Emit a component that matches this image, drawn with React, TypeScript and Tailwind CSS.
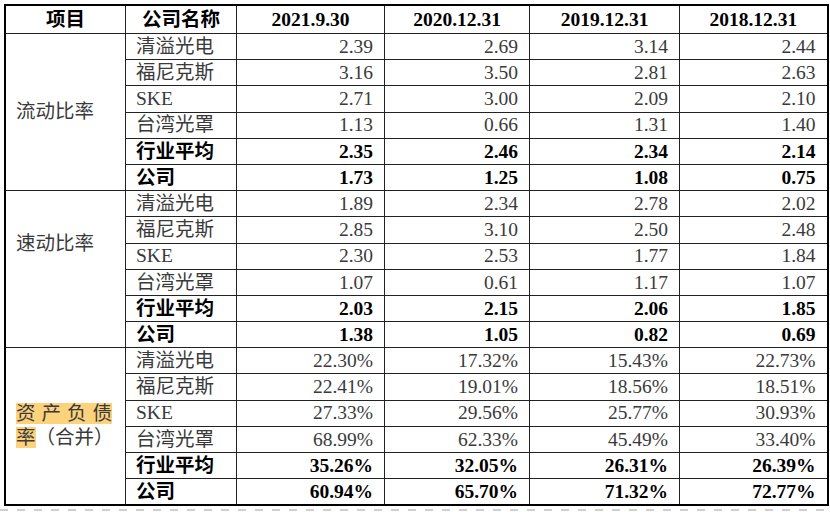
const FONT = "font-['Liberation_Serif','Noto_Sans_CJK_SC',serif]"

const YEARS = ['2021.9.30', '2020.12.31', '2019.12.31', '2018.12.31']

type Row = { name: string; values: string[]; bold?: boolean }

const GROUPS: { key: string; rows: Row[] }[] = [
  {
    key: 'current',
    rows: [
      { name: '清溢光电', values: ['2.39', '2.69', '3.14', '2.44'] },
      { name: '福尼克斯', values: ['3.16', '3.50', '2.81', '2.63'] },
      { name: 'SKE', values: ['2.71', '3.00', '2.09', '2.10'] },
      { name: '台湾光罩', values: ['1.13', '0.66', '1.31', '1.40'] },
      { name: '行业平均', values: ['2.35', '2.46', '2.34', '2.14'], bold: true },
      { name: '公司', values: ['1.73', '1.25', '1.08', '0.75'], bold: true },
    ],
  },
  {
    key: 'quick',
    rows: [
      { name: '清溢光电', values: ['1.89', '2.34', '2.78', '2.02'] },
      { name: '福尼克斯', values: ['2.85', '3.10', '2.50', '2.48'] },
      { name: 'SKE', values: ['2.30', '2.53', '1.77', '1.84'] },
      { name: '台湾光罩', values: ['1.07', '0.61', '1.17', '1.07'] },
      { name: '行业平均', values: ['2.03', '2.15', '2.06', '1.85'], bold: true },
      { name: '公司', values: ['1.38', '1.05', '0.82', '0.69'], bold: true },
    ],
  },
  {
    key: 'debt',
    rows: [
      { name: '清溢光电', values: ['22.30%', '17.32%', '15.43%', '22.73%'] },
      { name: '福尼克斯', values: ['22.41%', '19.01%', '18.56%', '18.51%'] },
      { name: 'SKE', values: ['27.33%', '29.56%', '25.77%', '30.93%'] },
      { name: '台湾光罩', values: ['68.99%', '62.33%', '45.49%', '33.40%'] },
      { name: '行业平均', values: ['35.26%', '32.05%', '26.31%', '26.39%'], bold: true },
      { name: '公司', values: ['60.94%', '65.70%', '71.32%', '72.77%'], bold: true },
    ],
  },
]

function GroupLabel({ k }: { k: string }) {
  if (k === 'current') return <span>流动比率</span>
  if (k === 'quick') return <span>速动比率</span>
  // highlighted two-line label
  return (
    <div className="flex flex-col gap-[4px] leading-[20px]">
      <div>
        <span className="bg-[#fdd27c]">
          <span className="tracking-[6px]">资产负</span>债
        </span>
      </div>
      <div>
        <span className="bg-[#fdd27c]">率</span>（合并）
      </div>
    </div>
  )
}

export default function App() {
  return (
    <div className={`w-[830px] h-[512px] bg-white ${FONT} text-[19.5px] leading-none`}>
      <div className="pl-[4px] pt-[4px]">
        <table className="table-fixed border-collapse border-2 border-black">
          <colgroup>
            <col className="w-[120.5px]" />
            <col className="w-[111px]" />
            <col className="w-[148px]" />
            <col className="w-[145px]" />
            <col className="w-[150px]" />
            <col className="w-[148px]" />
          </colgroup>
          <thead>
            <tr className="h-[28.5px]">
              <th className="border border-[#222] font-bold text-black text-center p-0">项目</th>
              <th className="border border-[#222] font-bold text-black text-center p-0">公司名称</th>
              {YEARS.map((y) => (
                <th key={y} className="border border-[#222] font-bold text-black text-center p-0">
                  {y}
                </th>
              ))}
            </tr>
          </thead>
          <tbody>
            {GROUPS.map((g) =>
              g.rows.map((r, i) => (
                <tr key={g.key + i} className="h-[26.2px]">
                  {i === 0 && (
                    <td
                      rowSpan={g.rows.length}
                      className={`border border-[#222] text-[#3a3a3a] pl-[10px] pr-0 pb-0 ${
                        g.key === 'quick' ? 'align-top pt-[43px]' : 'align-middle pt-0'
                      }`}
                    >
                      <GroupLabel k={g.key} />
                    </td>
                  )}
                  <td
                    className={`border border-[#222] pl-[10px] p-0 text-left ${
                      r.bold ? 'font-bold text-black' : 'text-[#3a3a3a]'
                    }`}
                  >
                    {r.name}
                  </td>
                  {r.values.map((v, j) => (
                    <td
                      key={j}
                      className={`border border-[#222] pr-[11px] p-0 text-right ${
                        r.bold ? 'font-bold text-black' : 'text-[#3a3a3a]'
                      }`}
                    >
                      {v}
                    </td>
                  ))}
                </tr>
              )),
            )}
          </tbody>
        </table>
      </div>
      {/* dashed rule under the table */}
      <div className="mt-[3px] h-[2px] w-full bg-[repeating-linear-gradient(90deg,#cfcfcf_0_8px,transparent_8px_17px)]" />
    </div>
  )
}
